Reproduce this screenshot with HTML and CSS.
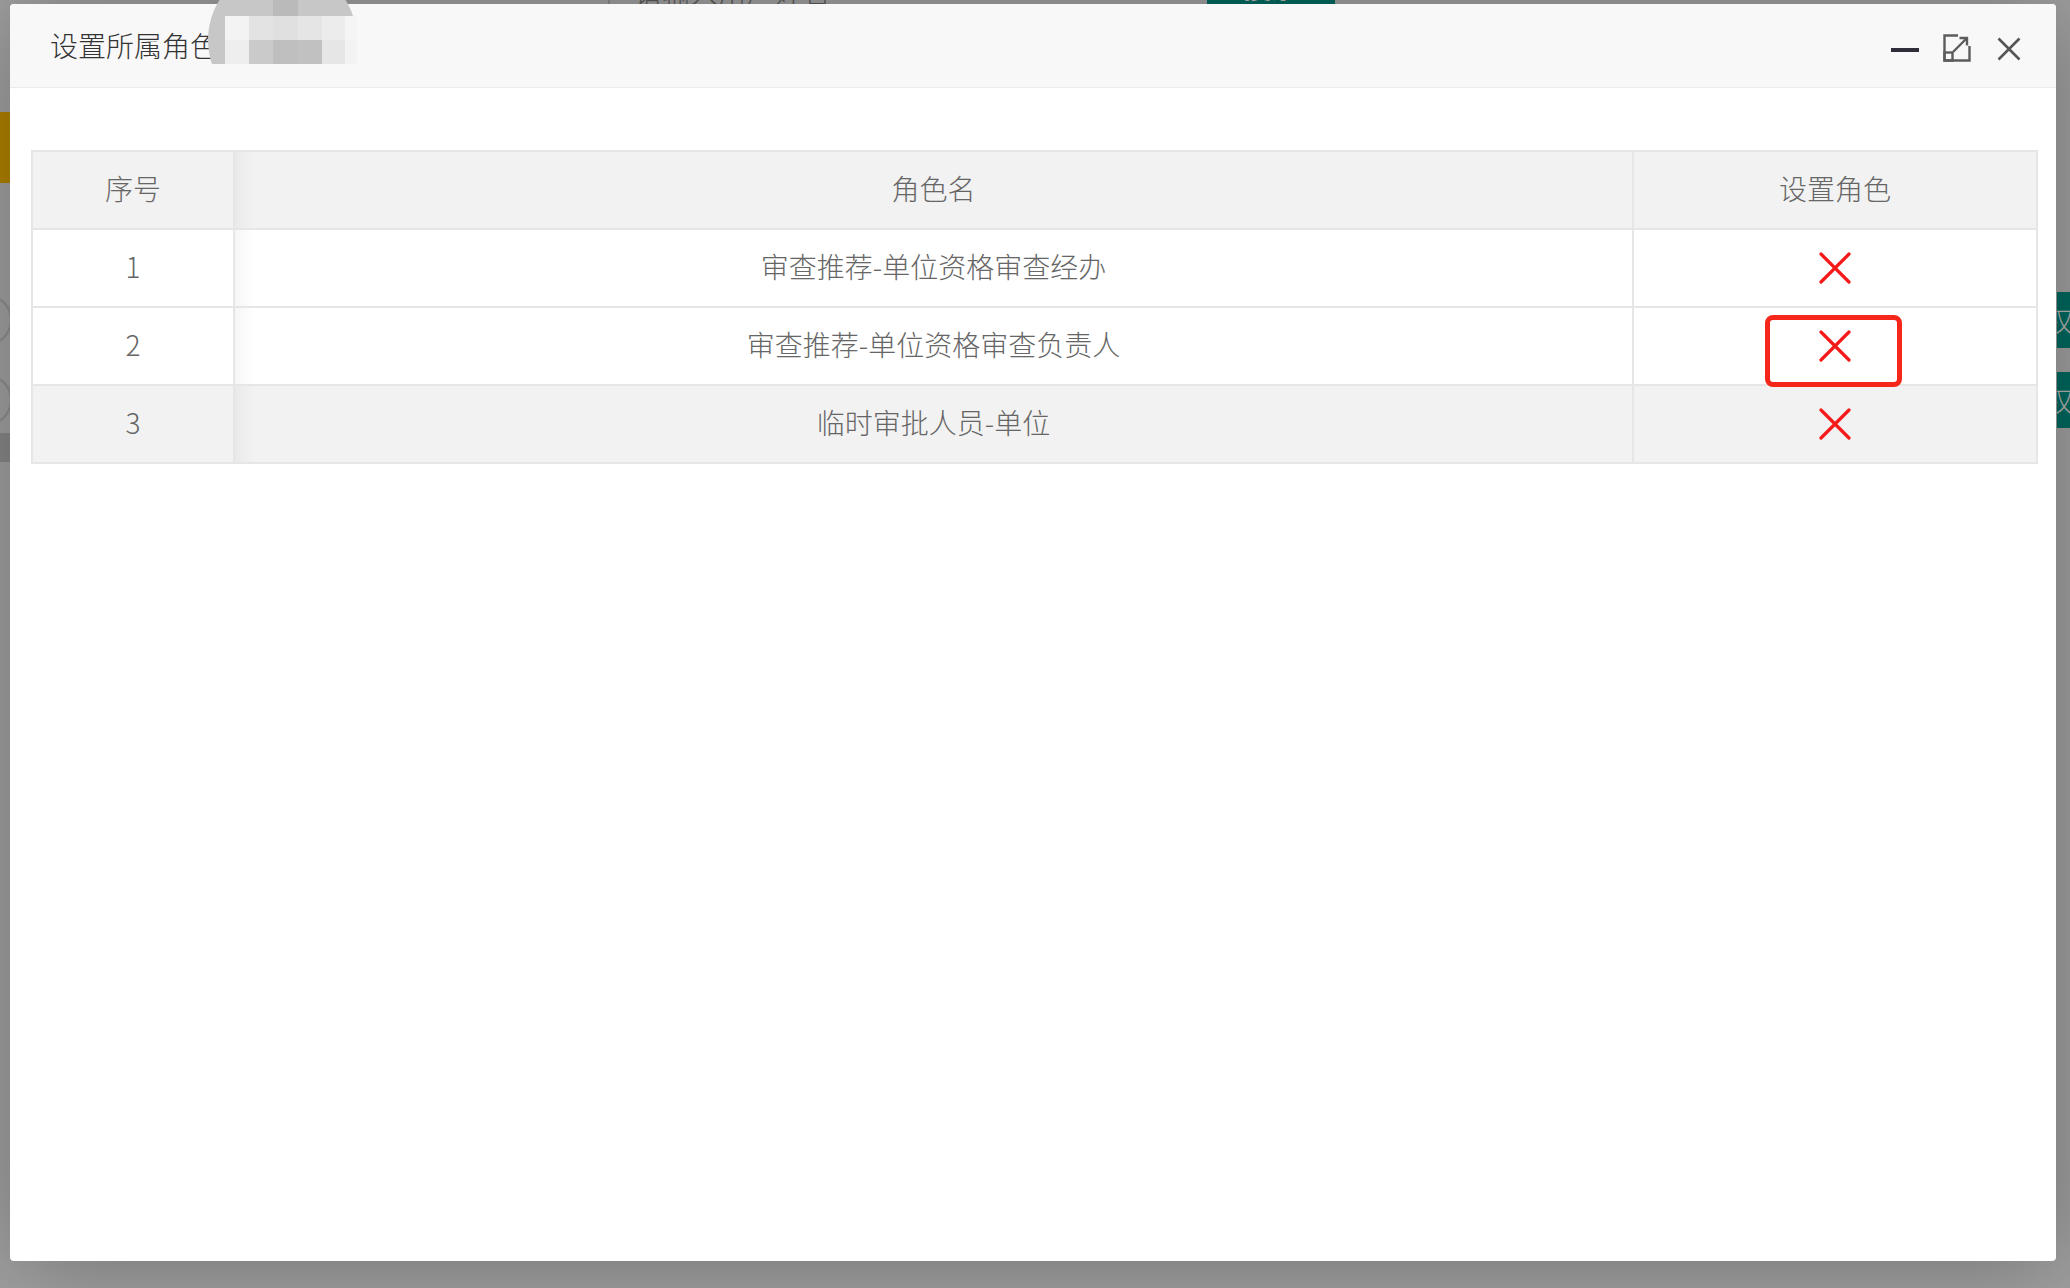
FILE: index.html
```html
<!DOCTYPE html>
<html lang="zh-CN">
<head>
<meta charset="utf-8">
<title>设置所属角色</title>
<link rel="stylesheet" href="styles.css">
</head>
<body>
<div class="backdrop">
  <div class="bg-top">
    <div class="bg-input">请输入用户姓名</div>
    <div class="bg-btn">搜索</div>
  </div>
  <div class="bg-left-gold"></div>
  <div class="bg-left-dark"></div>
  <div class="bg-left-circle c1"></div>
  <div class="bg-left-circle c2"></div>
  <div class="bg-right-btn r1">权</div>
  <div class="bg-right-btn r2">权</div>
</div>

<div class="layer">
  <div class="layer-title">
    <span class="title-text">设置所属角色</span>
    <div class="setwin">
      <svg class="ic-min" width="28" height="28" viewBox="0 0 28 28"><rect x="0" y="14" width="28" height="4" fill="#2e2d3a"/></svg>
      <svg class="ic-max" width="28" height="28" viewBox="0 0 28 28" fill="none" stroke="#5c5c5c" stroke-width="2.4">
        <path d="M15 1.5H1.5V26.5H26.5V12"/>
        <rect x="1.5" y="18.5" width="8" height="8"/>
        <path d="M10 18L24 4M16.5 4H24V11.5"/>
      </svg>
      <svg class="ic-close" width="24" height="24" viewBox="0 0 24 24" fill="none" stroke="#555" stroke-width="2.6"><path d="M1.5 1.5L22.5 22.5M22.5 1.5L1.5 22.5"/></svg>
    </div>
  </div>
  <div class="layer-content">
    <table class="role-table">
      <colgroup><col class="col-no"><col class="col-name"><col class="col-set"></colgroup>
      <thead>
        <tr><th>序号</th><th class="shadow-cell">角色名</th><th>设置角色</th></tr>
      </thead>
      <tbody>
        <tr><td>1</td><td class="shadow-cell">审查推荐-单位资格审查经办</td><td class="icon-cell"><svg class="xmark" width="32" height="32" viewBox="0 0 32 32"><path d="M2 2L30 30M30 2L2 30"/></svg></td></tr>
        <tr><td>2</td><td class="shadow-cell">审查推荐-单位资格审查负责人</td><td class="icon-cell"><svg class="xmark" width="32" height="32" viewBox="0 0 32 32"><path d="M2 2L30 30M30 2L2 30"/></svg></td></tr>
        <tr class="hover"><td>3</td><td class="shadow-cell">临时审批人员-单位</td><td class="icon-cell"><svg class="xmark" width="32" height="32" viewBox="0 0 32 32"><path d="M2 2L30 30M30 2L2 30"/></svg></td></tr>
      </tbody>
    </table>
  </div>
  <div class="annot"></div>
</div>

<div class="mosaic">
  <div class="px p-top"></div>
  <div class="px a1"></div><div class="px a2"></div><div class="px a3"></div><div class="px a4"></div><div class="px a5"></div><div class="px a6"></div>
  <div class="px b1"></div><div class="px b2"></div><div class="px b3"></div><div class="px b4"></div><div class="px b5"></div><div class="px b6"></div>
</div>
</body>
</html>
```

FILE: styles.css
```css
html, body {
  margin: 0;
  padding: 0;
}
body {
  width: 2070px;
  height: 1288px;
  overflow: hidden;
  position: relative;
  background: #a0a0a0;
  font-family: "Microsoft YaHei", "Noto Sans CJK SC", "Liberation Sans", sans-serif;
  font-weight: 300;
}

/* page behind the shade */
.backdrop {
  position: absolute;
  inset: 0;
}
.bg-top {
  position: absolute;
  left: 0;
  top: 0;
  width: 2070px;
  height: 10px;
}
.bg-input {
  position: absolute;
  left: 608px;
  top: -22px;
  width: 500px;
  height: 30px;
  border-left: 2px solid #8a8a8a;
  padding-left: 24px;
  font-size: 28px;
  line-height: 28px;
  color: #5a5a5a;
}
.bg-btn {
  position: absolute;
  left: 1207px;
  top: -30px;
  width: 128px;
  height: 34px;
  background: #00695f;
  color: #b3b3b3;
  font-size: 28px;
  line-height: 34px;
  text-align: center;
}
.bg-left-gold {
  position: absolute;
  left: 0;
  top: 112px;
  width: 12px;
  height: 71px;
  background: #b08100;
}
.bg-left-dark {
  position: absolute;
  left: 0;
  top: 433px;
  width: 12px;
  height: 29px;
  background: #878787;
}
.bg-left-circle {
  position: absolute;
  left: -40px;
  width: 48px;
  height: 48px;
  border: 2px solid #8c8c8c;
  border-radius: 50%;
}
.bg-left-circle.c1 { top: 294px; }
.bg-left-circle.c2 { top: 374px; }
.bg-right-btn {
  position: absolute;
  left: 2057px;
  width: 60px;
  background: #00695f;
  color: #b3b3b3;
  font-size: 28px;
  line-height: 56px;
  height: 56px;
  text-indent: -12px;
  overflow: hidden;
}
.bg-right-btn.r1 { top: 292px; }
.bg-right-btn.r2 { top: 372px; }

/* layer dialog */
.layer {
  position: absolute;
  left: 10px;
  top: 4px;
  width: 2046px;
  height: 1257px;
  background: #fff;
  border-radius: 4px;
  box-shadow: 2px 2px 100px rgba(0, 0, 0, 0.3);
}
.layer-title {
  position: relative;
  height: 83px;
  line-height: 82px;
  padding-left: 40px;
  background: #f8f8f8;
  border-bottom: 1px solid #ececec;
  border-radius: 4px 4px 0 0;
  color: #333;
  font-size: 28px;
}
.setwin {
  position: absolute;
  right: 35px;
  top: 30px;
  height: 28px;
  display: flex;
  align-items: center;
}
.setwin svg { display: block; }
.ic-min { margin-right: 24px; }
.ic-max { margin-right: 26px; }
.ic-close { margin-top: 2px; }

.layer-content {
  padding: 62px 20px 0 21px;
}
.role-table {
  width: 2005px;
  border-collapse: collapse;
  table-layout: fixed;
  color: #666;
  font-size: 28px;
  border: 2px solid #e6e6e6;
}
.col-no { width: 202px; }
.col-name { width: 1399px; }
.col-set { width: 404px; }
.role-table th,
.role-table td {
  height: 72px;
  padding: 0 30px 4px;
  text-align: center;
  vertical-align: middle;
  border: 2px solid #e6e6e6;
  font-weight: 300;
}
.role-table td.icon-cell {
  padding-bottom: 0;
  height: 76px;
}
.role-table thead tr { background: #f2f2f2; }
.role-table tr.hover { background: #f2f2f2; }
.role-table .shadow-cell {
  background-image: linear-gradient(to right, rgba(0,0,0,0.035), rgba(0,0,0,0) 18px);
}
.xmark {
  display: block;
  margin: 0 auto;
  fill: none;
  stroke: #f51a1a;
  stroke-width: 3.2;
  stroke-linecap: round;
}

/* annotation box */
.annot {
  position: absolute;
  left: 1755px;
  top: 311px;
  width: 127px;
  height: 62px;
  border: 5px solid #f5261a;
  border-radius: 8px;
}

/* pixelated mosaic over title */
.mosaic {
  position: absolute;
  left: 208px;
  top: 0;
  width: 149px;
  height: 64px;
  overflow: hidden;
  display: grid;
  grid-template-columns: 17px 24px 24px 25px 24px 23px 12px;
  grid-template-rows: 16px 24px 24px;
  isolation: isolate;
}
.mosaic::before {
  content: "";
  position: absolute;
  left: 0;
  top: -35px;
  width: 149px;
  height: 150px;
  border-radius: 50%;
  background: #c7c7c7;
  z-index: -1;
}
.p-top { grid-column: 4; grid-row: 1; background: #bababa; }
.a1 { grid-column: 2; grid-row: 2; background: #f3f3f3; }
.a2 { grid-column: 3; grid-row: 2; background: #e3e3e3; }
.a3 { grid-column: 4; grid-row: 2; background: #e0e0e0; }
.a4 { grid-column: 5; grid-row: 2; background: #e5e5e5; }
.a5 { grid-column: 6; grid-row: 2; background: #ececec; }
.a6 { grid-column: 7; grid-row: 2; background: #f5f5f5; }
.b1 { grid-column: 2; grid-row: 3; background: #eeeeee; }
.b2 { grid-column: 3; grid-row: 3; background: #cacaca; }
.b3 { grid-column: 4; grid-row: 3; background: #bfbfbf; }
.b4 { grid-column: 5; grid-row: 3; background: #c1c1c1; }
.b5 { grid-column: 6; grid-row: 3; background: #e6e6e6; }
.b6 { grid-column: 7; grid-row: 3; background: #f3f3f3; }
```
